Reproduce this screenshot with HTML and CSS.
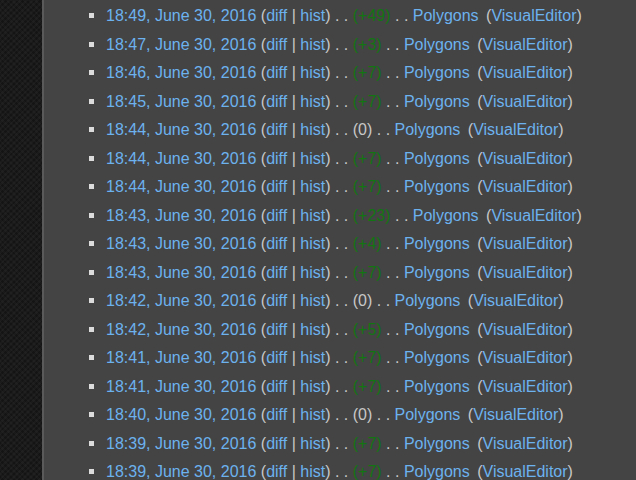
FILE: index.html
```html
<!DOCTYPE html>
<html>
<head>
<meta charset="utf-8">
<link rel="stylesheet" href="styles.css">
</head>
<body>
<div class="page">
  <div class="sidebar"></div>
  <div class="content">
    <ul class="changes">
      <li><a class="ts">18:49, June 30, 2016</a> <span class="g">(</span><a>diff</a> <span class="g">|</span> <a>hist</a><span class="g">) . .</span> <span class="pos">(+49)</span> <span class="g">. .</span> <a>Polygons</a> <span class="tag"><span class="g">(</span><a>VisualEditor</a><span class="g">)</span></span></li>
      <li><a class="ts">18:47, June 30, 2016</a> <span class="g">(</span><a>diff</a> <span class="g">|</span> <a>hist</a><span class="g">) . .</span> <span class="pos">(+3)</span> <span class="g">. .</span> <a>Polygons</a> <span class="tag"><span class="g">(</span><a>VisualEditor</a><span class="g">)</span></span></li>
      <li><a class="ts">18:46, June 30, 2016</a> <span class="g">(</span><a>diff</a> <span class="g">|</span> <a>hist</a><span class="g">) . .</span> <span class="pos">(+7)</span> <span class="g">. .</span> <a>Polygons</a> <span class="tag"><span class="g">(</span><a>VisualEditor</a><span class="g">)</span></span></li>
      <li><a class="ts">18:45, June 30, 2016</a> <span class="g">(</span><a>diff</a> <span class="g">|</span> <a>hist</a><span class="g">) . .</span> <span class="pos">(+7)</span> <span class="g">. .</span> <a>Polygons</a> <span class="tag"><span class="g">(</span><a>VisualEditor</a><span class="g">)</span></span></li>
      <li><a class="ts">18:44, June 30, 2016</a> <span class="g">(</span><a>diff</a> <span class="g">|</span> <a>hist</a><span class="g">) . .</span> <span class="g">(0)</span> <span class="g">. .</span> <a>Polygons</a> <span class="tag"><span class="g">(</span><a>VisualEditor</a><span class="g">)</span></span></li>
      <li><a class="ts">18:44, June 30, 2016</a> <span class="g">(</span><a>diff</a> <span class="g">|</span> <a>hist</a><span class="g">) . .</span> <span class="pos">(+7)</span> <span class="g">. .</span> <a>Polygons</a> <span class="tag"><span class="g">(</span><a>VisualEditor</a><span class="g">)</span></span></li>
      <li><a class="ts">18:44, June 30, 2016</a> <span class="g">(</span><a>diff</a> <span class="g">|</span> <a>hist</a><span class="g">) . .</span> <span class="pos">(+7)</span> <span class="g">. .</span> <a>Polygons</a> <span class="tag"><span class="g">(</span><a>VisualEditor</a><span class="g">)</span></span></li>
      <li><a class="ts">18:43, June 30, 2016</a> <span class="g">(</span><a>diff</a> <span class="g">|</span> <a>hist</a><span class="g">) . .</span> <span class="pos">(+23)</span> <span class="g">. .</span> <a>Polygons</a> <span class="tag"><span class="g">(</span><a>VisualEditor</a><span class="g">)</span></span></li>
      <li><a class="ts">18:43, June 30, 2016</a> <span class="g">(</span><a>diff</a> <span class="g">|</span> <a>hist</a><span class="g">) . .</span> <span class="pos">(+4)</span> <span class="g">. .</span> <a>Polygons</a> <span class="tag"><span class="g">(</span><a>VisualEditor</a><span class="g">)</span></span></li>
      <li><a class="ts">18:43, June 30, 2016</a> <span class="g">(</span><a>diff</a> <span class="g">|</span> <a>hist</a><span class="g">) . .</span> <span class="pos">(+7)</span> <span class="g">. .</span> <a>Polygons</a> <span class="tag"><span class="g">(</span><a>VisualEditor</a><span class="g">)</span></span></li>
      <li><a class="ts">18:42, June 30, 2016</a> <span class="g">(</span><a>diff</a> <span class="g">|</span> <a>hist</a><span class="g">) . .</span> <span class="g">(0)</span> <span class="g">. .</span> <a>Polygons</a> <span class="tag"><span class="g">(</span><a>VisualEditor</a><span class="g">)</span></span></li>
      <li><a class="ts">18:42, June 30, 2016</a> <span class="g">(</span><a>diff</a> <span class="g">|</span> <a>hist</a><span class="g">) . .</span> <span class="pos">(+5)</span> <span class="g">. .</span> <a>Polygons</a> <span class="tag"><span class="g">(</span><a>VisualEditor</a><span class="g">)</span></span></li>
      <li><a class="ts">18:41, June 30, 2016</a> <span class="g">(</span><a>diff</a> <span class="g">|</span> <a>hist</a><span class="g">) . .</span> <span class="pos">(+7)</span> <span class="g">. .</span> <a>Polygons</a> <span class="tag"><span class="g">(</span><a>VisualEditor</a><span class="g">)</span></span></li>
      <li><a class="ts">18:41, June 30, 2016</a> <span class="g">(</span><a>diff</a> <span class="g">|</span> <a>hist</a><span class="g">) . .</span> <span class="pos">(+7)</span> <span class="g">. .</span> <a>Polygons</a> <span class="tag"><span class="g">(</span><a>VisualEditor</a><span class="g">)</span></span></li>
      <li><a class="ts">18:40, June 30, 2016</a> <span class="g">(</span><a>diff</a> <span class="g">|</span> <a>hist</a><span class="g">) . .</span> <span class="g">(0)</span> <span class="g">. .</span> <a>Polygons</a> <span class="tag"><span class="g">(</span><a>VisualEditor</a><span class="g">)</span></span></li>
      <li><a class="ts">18:39, June 30, 2016</a> <span class="g">(</span><a>diff</a> <span class="g">|</span> <a>hist</a><span class="g">) . .</span> <span class="pos">(+7)</span> <span class="g">. .</span> <a>Polygons</a> <span class="tag"><span class="g">(</span><a>VisualEditor</a><span class="g">)</span></span></li>
      <li><a class="ts">18:39, June 30, 2016</a> <span class="g">(</span><a>diff</a> <span class="g">|</span> <a>hist</a><span class="g">) . .</span> <span class="pos">(+7)</span> <span class="g">. .</span> <a>Polygons</a> <span class="tag"><span class="g">(</span><a>VisualEditor</a><span class="g">)</span></span></li>
    </ul>
  </div>
</div>
</body>
</html>
```
FILE: styles.css
```css
html, body {
  margin: 0;
  padding: 0;
  height: 100%;
  overflow: hidden;
  background: #444444;
}
.page {
  display: flex;
  min-height: 100%;
}
.sidebar {
  width: 42px;
  flex: none;
  background-color: #1b1b1b;
  background-image:
    repeating-linear-gradient(45deg, rgba(255,255,255,0.025) 0 2px, transparent 2px 4px),
    repeating-linear-gradient(-45deg, rgba(0,0,0,0.25) 0 2px, transparent 2px 4px);
  border-right: 2px solid #5a5a5a;
}
.content {
  flex: 1;
  background: #444444;
}
.changes {
  list-style: none;
  margin: 0;
  padding: 2px 0 0 45px;
  font-family: "Liberation Sans", Arial, sans-serif;
  font-size: 16px;
  line-height: 28.5px;
  color: #c8c8c8;
  white-space: nowrap;
}
.changes li::before {
  content: "";
  display: inline-block;
  width: 5px;
  height: 5px;
  background: #dcdcdc;
  margin-right: 12px;
  vertical-align: 3px;
}
.changes a {
  color: #6cb2ef;
  text-decoration: none;
}
.g {
  color: #c8c8c8;
}
.pos {
  color: #127512;
}
.tag {
  margin-left: 3px;
}
```
